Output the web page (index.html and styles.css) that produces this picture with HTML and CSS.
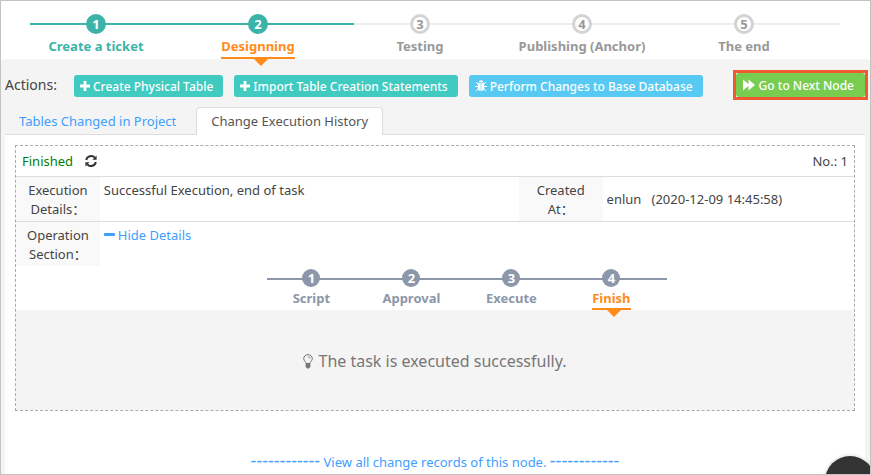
FILE: index.html
```html
<!DOCTYPE html>
<html lang="en">
<head>
<meta charset="UTF-8">
<meta name="viewport" content="width=device-width, initial-scale=1.0">
<title>Ticket - Designning</title>
<link rel="stylesheet" href="styles.css">
</head>
<body>
<div class="page">
    <ol class="steps">
        <li class="step done"><span class="num">1</span><span class="label">Create a ticket</span></li>
        <li class="step done current"><span class="num">2</span><span class="label">Designning</span></li>
        <li class="step"><span class="num">3</span><span class="label">Testing</span></li>
        <li class="step"><span class="num">4</span><span class="label">Publishing (Anchor)</span></li>
        <li class="step"><span class="num">5</span><span class="label">The end</span></li>
    </ol>

    <main class="panel">
        <div class="actions">
            <span class="actions-title">Actions:</span>
            <button type="button" class="btn btn-teal">
                <svg class="icon" viewBox="0 0 10 10"><path d="M3.6 0h2.8v3.6H10v2.8H6.4V10H3.6V6.4H0V3.6h3.6z"/></svg>
                Create Physical Table
            </button>
            <button type="button" class="btn btn-teal">
                <svg class="icon" viewBox="0 0 10 10"><path d="M3.6 0h2.8v3.6H10v2.8H6.4V10H3.6V6.4H0V3.6h3.6z"/></svg>
                Import Table Creation Statements
            </button>
            <button type="button" class="btn btn-blue">
                <svg class="icon icon-wide" viewBox="0 0 12 12"><path d="M3.6 2.6a2.4 2.4 0 0 1 4.8 0z"/><path d="M2.8 3.2h2.9V11C4 11 2.8 9.6 2.8 8zM6.3 3.2h2.9V8c0 1.6-1.2 3-2.9 3z"/><path class="line" d="M1 2l2 2M11 2L9 4M0 6.5h3M12 6.5H9M1 11l2-2M11 11L9 9"/></svg>
                Perform Changes to Base Database
            </button>
            <div class="next">
                <button type="button" class="btn btn-green">
                    <svg class="icon icon-wide" viewBox="0 0 12 12"><path d="M0 .5L5.5 5V.5L12 6l-6.5 5.5V7L0 11.5z"/></svg>
                    Go to Next Node
                </button>
            </div>
        </div>

        <nav class="tabs">
            <a href="#tables" class="tab">Tables Changed in Project</a>
            <a href="#history" class="tab active">Change Execution History</a>
        </nav>

        <section class="content">
            <div class="record">
                <header class="record-head">
                    <span class="status">Finished</span>
                    <button type="button" class="refresh" aria-label="Refresh">
                        <svg viewBox="0 0 12 12"><path class="arc" d="M1.2 5A4.9 4.9 0 0 1 9.7 2.7M10.8 7A4.9 4.9 0 0 1 2.3 9.3"/><path d="M11.6.6v4.2H7.4zM.4 11.4V7.2h4.2z"/></svg>
                    </button>
                    <span class="record-no">No.: 1</span>
                </header>

                <table class="info">
                    <tr>
                        <th scope="row">Execution Details：</th>
                        <td class="result">Successful Execution, end of task</td>
                        <th scope="row">Created At：</th>
                        <td class="created">enlun &nbsp; (2020-12-09 14:45:58)</td>
                    </tr>
                    <tr>
                        <th scope="row">Operation Section：</th>
                        <td colspan="3"><a href="#details"><svg class="minus" viewBox="0 0 11 3"><rect width="11" height="3" rx="1"/></svg>Hide Details</a></td>
                    </tr>
                </table>

                <ol class="steps mini">
                    <li class="step"><span class="num">1</span><span class="label">Script</span></li>
                    <li class="step"><span class="num">2</span><span class="label">Approval</span></li>
                    <li class="step"><span class="num">3</span><span class="label">Execute</span></li>
                    <li class="step current"><span class="num">4</span><span class="label">Finish</span></li>
                </ol>

                <div class="message">
                    <svg class="bulb" viewBox="0 0 10 15"><path class="outline" d="M3 9.5C3 7.5.7 7 .7 4.6a4.3 4 0 0 1 8.6 0C9.3 7 7 7.5 7 9.5z"/><path class="outline" d="M5 2.7c1.2 0 2 .7 2 1.7"/><path d="M2.6 9.5h4.8v3.3L6 14.5H4l-1.4-1.7z"/></svg>
                    The task is executed successfully.
                </div>
            </div>

            <p class="more">
                <a href="#records"><span class="dashes">------------</span> View all change records of this node. <span class="dashes">------------</span></a>
            </p>
        </section>
    </main>

    <button type="button" class="float-btn" aria-label="Help"></button>
</div>
</body>
</html>
```

FILE: styles.css
```css
* {
    box-sizing: border-box;
}

body {
    margin: 0;
    font-family: "Noto Sans", "Noto Sans CJK SC", sans-serif;
    font-size: 13px;
    line-height: 19px;
    color: #444;
    background: #fff;
}

a {
    color: #409eff;
    text-decoration: none;
}

button {
    font-family: inherit;
    cursor: pointer;
}

.page {
    position: relative;
    display: flex;
    flex-direction: column;
    min-height: 100vh;
    border: 1px solid #c2c2c2;
    overflow: hidden;
}

/* steps */
.steps {
    display: flex;
    margin: 0;
    padding: 13px 30px 0 29px;
    list-style: none;
}

.step {
    position: relative;
    flex: 1;
    display: flex;
    flex-direction: column;
    align-items: center;
    padding-right: 30px;
    color: #999;
    font-weight: bold;
}

.step::before {
    content: "";
    position: absolute;
    top: 9px;
    left: 0;
    right: 0;
    height: 2px;
    background: #eee;
}

.num {
    position: relative;
    width: 20px;
    height: 20px;
    border: 3px solid #d3d3d3;
    border-radius: 50%;
    background: #fff;
    line-height: 15px;
    text-align: center;
}

.label {
    position: relative;
    margin-top: 3px;
    height: 22px;
    line-height: 18px;
    white-space: nowrap;
}

.step.done {
    color: #3bb3a9;
}

.step.done::before {
    background: #3bb3a9;
}

.step.done .num {
    background: #3bb3a9;
    border-color: #3bb3a9;
    color: #fff;
}

.step.current .label {
    color: #ff8c1a;
    border-bottom: 2px solid #ff8c1a;
}

.step.current .label::after {
    content: "";
    position: absolute;
    top: 100%;
    left: 50%;
    z-index: 1;
    margin-top: 2px;
    margin-left: -4px;
    border: 7px solid transparent;
    border-top-color: #ff8c1a;
    border-bottom: 0;
}

.panel {
    flex: 1;
    display: flex;
    flex-direction: column;
    padding: 0 5px 0 4px;
    background: #f4f4f4;
    border-radius: 4px 4px 0 0;
}

/* action bar */
.actions {
    display: flex;
    align-items: center;
    height: 48px;
    padding-top: 6px;
}

.actions-title {
    margin-right: 17px;
    margin-bottom: 4px;
    font-size: 14px;
}

.btn {
    display: flex;
    align-items: center;
    gap: 3px;
    height: 22px;
    margin-right: 11px;
    padding: 0 10px 0 6px;
    border: 0;
    border-radius: 3px;
    font-size: 12px;
    font-weight: 500;
    color: #fff;
    white-space: nowrap;
}

.btn-teal {
    background: #41cac0;
}

.btn-blue {
    background: #58c9f3;
}

.btn-green {
    height: 24px;
    margin: 0;
    padding: 0 11px 0 7px;
    gap: 4px;
    background: #78cd51;
}

.next {
    margin-left: auto;
    margin-right: -3px;
    margin-bottom: 2px;
    border: 3px solid #f05a32;
}

.icon {
    width: 10px;
    height: 10px;
    fill: #fff;
}

.icon-wide {
    width: 12px;
    height: 12px;
}

.icon .line {
    fill: none;
    stroke: #fff;
}

/* tabs */
.tabs {
    display: flex;
    gap: 6px;
    border-bottom: 1px solid #ddd;
}

.tab {
    padding: 4px 13px 3px;
    border: 1px solid transparent;
    border-bottom: 0;
    border-radius: 4px 4px 0 0;
}

.tab.active {
    margin-bottom: -1px;
    padding: 4px 14px;
    border-color: #ddd;
    background: #fff;
    color: #555;
}

.content {
    flex: 1;
    padding: 10px 10px 0;
    background: #fff;
}

/* execution record */
.record {
    border: 1px dashed #aaa;
}

.record-head {
    display: flex;
    align-items: center;
    height: 30px;
    padding: 0 6px;
}

.status {
    color: #008000;
}

.refresh {
    display: flex;
    margin-left: 12px;
    padding: 0;
    border: 0;
    background: none;
}

.refresh svg {
    width: 12px;
    height: 12px;
    fill: #333;
}

.refresh .arc {
    fill: none;
    stroke: #333;
    stroke-width: 2;
}

.record-no {
    margin-left: auto;
}

.info {
    width: 100%;
    border-collapse: collapse;
    table-layout: fixed;
}

.info tr {
    border-top: 1px solid #ddd;
}

.info th {
    width: 10%;
    padding: 4px 8px 2px;
    background: #f9f9f9;
    font-weight: normal;
}

.info td {
    padding: 4px;
    vertical-align: top;
}

.info .result {
    width: 50%;
}

.info .created {
    vertical-align: middle;
}

.minus {
    width: 11px;
    height: 3px;
    margin-right: 3px;
    vertical-align: 4px;
    fill: #409eff;
}

/* small steps inside a record */
.mini {
    width: 400px;
    margin-left: 30%;
    padding: 3px 0 0;
}

.mini .step {
    padding-right: 12px;
    color: #8d97aa;
}

.mini .step::before {
    background: #8d97aa;
}

.mini .num {
    width: 18px;
    height: 18px;
    border: 0;
    background: #8d97aa;
    line-height: 18px;
    color: #fff;
}

.mini .label {
    margin-top: 1px;
    line-height: 20px;
}

.message {
    display: flex;
    align-items: center;
    justify-content: center;
    gap: 5px;
    height: 100px;
    padding-top: 2px;
    background: #f4f4f4;
    font-size: 16px;
    color: #777;
}

.bulb {
    width: 10px;
    height: 15px;
    fill: #777;
}

.bulb .outline {
    fill: none;
    stroke: #777;
}

.more {
    margin: 40px 0 0;
    text-align: center;
}

.dashes {
    font-size: 18px;
    line-height: 1;
}

.float-btn {
    position: absolute;
    right: -5px;
    bottom: -32px;
    width: 50px;
    height: 50px;
    border: 0;
    border-radius: 50%;
    background: #333;
    box-shadow: 0 0 4px rgba(0, 0, 0, 0.2);
}
```
